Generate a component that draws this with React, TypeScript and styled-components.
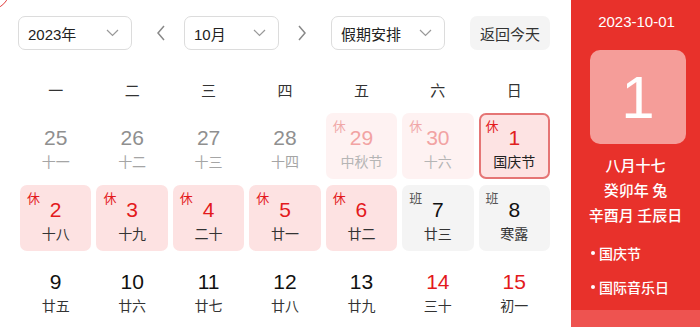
import React from "react";
import styled, { createGlobalStyle, css } from "styled-components";

const GlobalStyle = createGlobalStyle`
  html, body { margin: 0; padding: 0; background: #fff; }
  body { font-family: "Liberation Sans", "Noto Sans CJK SC", sans-serif; color: #222; }
  * { box-sizing: border-box; }
`;

const Page = styled.div`
  position: relative;
  display: flex;
  width: 700px;
  height: 327px;
  overflow: hidden;
`;

const CornerArc = styled.div`
  position: absolute;
  left: -30px;
  top: -30px;
  width: 40px;
  height: 40px;
  border-radius: 50%;
  border: 1.5px solid #e03a3a;
`;

const Main = styled.div`
  width: 571px;
  padding: 16px 0 0 18px;
  display: flex;
  flex-direction: column;
`;

const Toolbar = styled.div`
  display: flex;
  align-items: center;
  height: 34px;
`;

const Select = styled.div<{ $w: number }>`
  width: ${(p) => p.$w}px;
  height: 34px;
  border: 1px solid #dcdcdc;
  border-radius: 7px;
  display: flex;
  align-items: center;
  justify-content: space-between;
  padding: 0 12px 0 9px;
  font-size: 15px;
  color: #222;
  font-family: "Liberation Sans", "Noto Sans CJK SC", sans-serif;
`;

const ArrowBtn = styled.div<{ $side: "l" | "r" }>`
  width: 46px;
  height: 34px;
  display: flex;
  align-items: center;
  justify-content: center;
  ${(p) => (p.$side === "l" ? css`margin-left: 6px;` : css`margin-right: 6px;`)}
`;

const TodayBtn = styled.div`
  margin-left: 25px;
  width: 80px;
  height: 34px;
  border-radius: 7px;
  background: #f4f4f4;
  display: flex;
  align-items: center;
  justify-content: center;
  font-size: 15px;
  color: #333;
  font-family: "Noto Sans CJK SC", sans-serif;
`;

const Week = styled.div`
  margin: 24px 0 9px 2px;
  width: 530px;
  height: 30px;
  display: grid;
  grid-template-columns: repeat(7, 1fr);
  column-gap: 5px;
  align-items: center;
  justify-items: center;
  font-family: "Noto Sans CJK SC", sans-serif;
  font-size: 15px;
  color: #333;
`;

const Grid = styled.div`
  margin-left: 2px;
  width: 530px;
  display: grid;
  grid-template-columns: repeat(7, 1fr);
  grid-auto-rows: 66px;
  column-gap: 5px;
  row-gap: 6px;
`;

type Kind = "prev" | "prevHoliday" | "selected" | "holiday" | "work" | "normal" | "weekend";

const cellBg: Record<Kind, string> = {
  prev: "transparent",
  prevHoliday: "#fef2f2",
  selected: "#fde3e3",
  holiday: "#fde2e2",
  work: "#f4f4f4",
  normal: "transparent",
  weekend: "transparent",
};

const numColor: Record<Kind, string> = {
  prev: "#8f8f8f",
  prevHoliday: "#f2a3a3",
  selected: "#e0201e",
  holiday: "#e3191c",
  work: "#111",
  normal: "#111",
  weekend: "#e3191c",
};

const lunarColor: Record<Kind, string> = {
  prev: "#a5a5a5",
  prevHoliday: "#b5b5b5",
  selected: "#222",
  holiday: "#333",
  work: "#333",
  normal: "#333",
  weekend: "#333",
};

const Cell = styled.div<{ $kind: Kind }>`
  position: relative;
  border-radius: 7px;
  background: ${(p) => cellBg[p.$kind]};
  border: ${(p) => (p.$kind === "selected" ? "2px solid #e57575" : "none")};
  display: flex;
  flex-direction: column;
  align-items: center;
  padding-top: ${(p) => (p.$kind === "selected" ? 11 : 13)}px;
`;

const Num = styled.div<{ $kind: Kind }>`
  font-family: "Liberation Sans", "Noto Sans CJK SC", sans-serif;
  font-size: 21px;
  line-height: 24px;
  color: ${(p) => numColor[p.$kind]};
`;

const Lunar = styled.div<{ $kind: Kind }>`
  font-family: "Noto Sans CJK SC", sans-serif;
  font-size: 14px;
  line-height: 22px;
  color: ${(p) => lunarColor[p.$kind]};
`;

const Tag = styled.span<{ $color: string; $sel?: boolean }>`
  position: absolute;
  left: ${(p) => (p.$sel ? 5 : 7)}px;
  top: ${(p) => (p.$sel ? 3 : 5)}px;
  font-family: "Noto Sans CJK SC", sans-serif;
  font-size: 13px;
  line-height: 16px;
  color: ${(p) => p.$color};
`;

const Side = styled.div`
  width: 129px;
  height: 327px;
  background: #e8312b;
  display: flex;
  flex-direction: column;
  align-items: center;
  color: #fff;
  padding-top: 12px;
`;

const SideDate = styled.div`
  font-family: "Liberation Sans", sans-serif;
  font-size: 15px;
  line-height: 20px;
  font-weight: 500;
  margin-left: 2px;
`;

const BigBox = styled.div`
  margin: 18px 0 0 5px;
  width: 96px;
  height: 94px;
  border-radius: 10px;
  background: #f59d99;
  display: flex;
  align-items: center;
  justify-content: center;
  font-family: "Liberation Sans", sans-serif;
  font-size: 60px;
  color: #fff;
`;

const LunarInfo = styled.div`
  margin-top: 8px;
  font-family: "Noto Sans CJK SC", sans-serif;
  font-size: 15px;
  font-weight: 500;
  line-height: 25px;
  text-align: center;
`;

const Events = styled.div`
  margin-top: 9px;
  align-self: stretch;
  padding-left: 20px;
  font-family: "Noto Sans CJK SC", sans-serif;
  font-size: 14px;
  font-weight: 500;
`;

const EventItem = styled.div`
  display: flex;
  align-items: center;
  height: 34px;
  &::before {
    content: "";
    width: 4px;
    height: 4px;
    border-radius: 50%;
    background: #fff;
    margin-right: 4px;
  }
`;

const SideFooter = styled.div`
  margin-top: auto;
  align-self: stretch;
  height: 17px;
  background: #ee5350;
`;

const Chevron = () => (
  <svg width="13" height="8" viewBox="0 0 13 8">
    <polyline points="1,1 6.5,6.5 12,1" fill="none" stroke="#999" strokeWidth="1.2" />
  </svg>
);

const Arrow = ({ dir }: { dir: "l" | "r" }) => (
  <svg width="10" height="16" viewBox="0 0 10 16">
    <polyline
      points={dir === "l" ? "8,1 2,8 8,15" : "2,1 8,8 2,15"}
      fill="none"
      stroke="#888"
      strokeWidth="1.5"
    />
  </svg>
);

type Day = { n: number; l: string; k: Kind; tag?: "休" | "班" };

const days: Day[] = [
  { n: 25, l: "十一", k: "prev" },
  { n: 26, l: "十二", k: "prev" },
  { n: 27, l: "十三", k: "prev" },
  { n: 28, l: "十四", k: "prev" },
  { n: 29, l: "中秋节", k: "prevHoliday", tag: "休" },
  { n: 30, l: "十六", k: "prevHoliday", tag: "休" },
  { n: 1, l: "国庆节", k: "selected", tag: "休" },
  { n: 2, l: "十八", k: "holiday", tag: "休" },
  { n: 3, l: "十九", k: "holiday", tag: "休" },
  { n: 4, l: "二十", k: "holiday", tag: "休" },
  { n: 5, l: "廿一", k: "holiday", tag: "休" },
  { n: 6, l: "廿二", k: "holiday", tag: "休" },
  { n: 7, l: "廿三", k: "work", tag: "班" },
  { n: 8, l: "寒露", k: "work", tag: "班" },
  { n: 9, l: "廿五", k: "normal" },
  { n: 10, l: "廿六", k: "normal" },
  { n: 11, l: "廿七", k: "normal" },
  { n: 12, l: "廿八", k: "normal" },
  { n: 13, l: "廿九", k: "normal" },
  { n: 14, l: "三十", k: "weekend" },
  { n: 15, l: "初一", k: "weekend" },
];

const tagColor = (d: Day) => {
  if (d.tag === "班") return "#555";
  if (d.k === "prevHoliday") return "#f0a8a8";
  return "#e3191c";
};

export default function App() {
  return (
    <>
      <GlobalStyle />
      <Page>
        <CornerArc />
        <Main>
          <Toolbar>
            <Select $w={114}>
              <span>2023年</span>
              <Chevron />
            </Select>
            <ArrowBtn $side="l">
              <Arrow dir="l" />
            </ArrowBtn>
            <Select $w={95}>
              <span>10月</span>
              <Chevron />
            </Select>
            <ArrowBtn $side="r">
              <Arrow dir="r" />
            </ArrowBtn>
            <Select $w={114}>
              <span style={{ fontFamily: '"Noto Sans CJK SC", sans-serif' }}>假期安排</span>
              <Chevron />
            </Select>
            <TodayBtn>返回今天</TodayBtn>
          </Toolbar>
          <Week>
            {["一", "二", "三", "四", "五", "六", "日"].map((w) => (
              <span key={w}>{w}</span>
            ))}
          </Week>
          <Grid>
            {days.map((d) => (
              <Cell key={`${d.k}-${d.n}`} $kind={d.k}>
                {d.tag && (
                  <Tag $color={tagColor(d)} $sel={d.k === "selected"}>
                    {d.tag}
                  </Tag>
                )}
                <Num $kind={d.k}>{d.n}</Num>
                <Lunar $kind={d.k}>{d.l}</Lunar>
              </Cell>
            ))}
          </Grid>
        </Main>
        <Side>
          <SideDate>2023-10-01</SideDate>
          <BigBox>1</BigBox>
          <LunarInfo>
            <div>八月十七</div>
            <div>癸卯年 兔</div>
            <div>辛酉月 壬辰日</div>
          </LunarInfo>
          <Events>
            <EventItem>国庆节</EventItem>
            <EventItem>国际音乐日</EventItem>
          </Events>
          <SideFooter />
        </Side>
      </Page>
    </>
  );
}
